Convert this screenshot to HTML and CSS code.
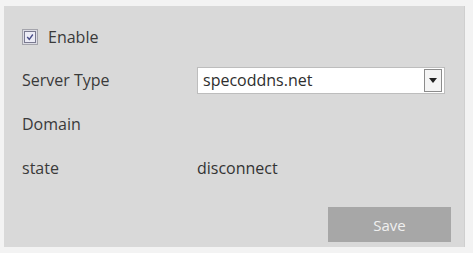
FILE: index.html
```html
<!DOCTYPE html>
<html>
<head>
<meta charset="utf-8">
<link rel="stylesheet" href="styles.css">
</head>
<body>
<div class="panel">
  <div class="row enable-row">
    <span class="checkbox"><span class="checkbox-inner"><svg width="10" height="10" viewBox="0 0 10 10"><path d="M2.2 5 L4.3 7.3 L7.8 2.5" fill="none" stroke="#4a4f8a" stroke-width="1.4"/></svg></span></span>
    <span class="label-enable">Enable</span>
  </div>
  <div class="row">
    <span class="label">Server Type</span>
    <div class="select">
      <span class="select-text">specoddns.net</span>
      <span class="select-btn"><svg width="8" height="5" viewBox="0 0 8 5"><path d="M0 0 H8 L4 5 Z" fill="#222"/></svg></span>
    </div>
  </div>
  <div class="row">
    <span class="label">Domain</span>
  </div>
  <div class="row">
    <span class="label">state</span>
    <span class="value">disconnect</span>
  </div>
  <div class="actions">
    <button class="save">Save</button>
  </div>
</div>
</body>
</html>
```
FILE: styles.css
```css
html, body { margin: 0; padding: 0; background: #f3f3f3; }
body { padding: 6px 8px 6px 4px; width: 473px; height: 253px; box-sizing: border-box; }
.panel {
  background: #d9d9d9;
  width: 461px;
  height: 241px;
  box-sizing: border-box;
  padding: 16px 0 0 18px;
  font-family: "Open Sans", "Noto Sans", sans-serif;
  font-size: 16px;
  color: #3a3a3a;
  border-right: 1px solid #cfcfcf;
}
.row { display: flex; align-items: center; height: 44px; }
.enable-row { height: 30px; margin-bottom: 6px; }
.checkbox {
  width: 16px; height: 16px; box-sizing: border-box;
  border: 1px solid #a4a4ac;
  background: #dcdce4;
  display: inline-flex; align-items: center; justify-content: center;
}
.checkbox-inner {
  width: 12px; height: 12px; box-sizing: border-box;
  border: 1px solid #7a7a90;
  background: #ececf6;
  display: flex; align-items: center; justify-content: center;
}
.label-enable { margin-left: 10px; }
.label { width: 175px; }
.select {
  width: 248px; height: 27px; box-sizing: border-box;
  background: #fff; border: 1px solid #bdbdbd;
  display: flex; align-items: center;
}
.select-text { flex: 1; padding-left: 5px; color: #2e2e2e; }
.select-btn {
  width: 16px; height: 21px; margin-right: 2px;
  border: 1px solid #8c8c8c; background: #f4f4f4;
  display: flex; align-items: center; justify-content: center;
}
.value { color: #333; }
.actions { display: flex; justify-content: flex-end; padding-right: 13px; margin-top: 17px; }
.save {
  width: 123px; height: 35px;
  background: #a7a7a7; border: none;
  color: #f0f0f0; font-family: "Open Sans", sans-serif; font-size: 15px;
}
```
